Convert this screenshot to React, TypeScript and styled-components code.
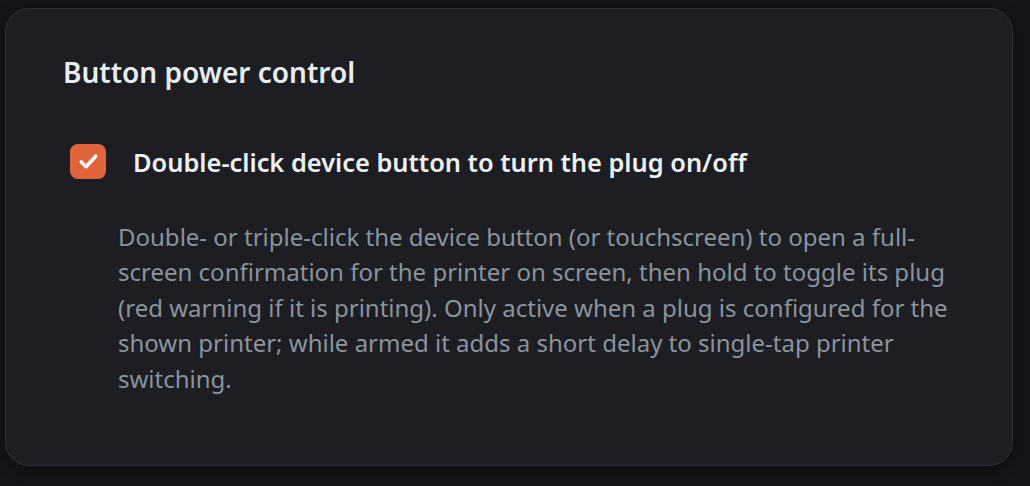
import React from "react";
import styled, { createGlobalStyle } from "styled-components";

const Global = createGlobalStyle`
  html, body { margin: 0; padding: 0; background: #131519; }
  body { font-family: "Noto Sans", "Open Sans", sans-serif; -webkit-font-smoothing: antialiased; }
  * { box-sizing: border-box; }
`;

const Page = styled.div`
  width: 1030px;
  height: 486px;
  padding: 8px 17px 20px 5px;
`;

const Card = styled.section`
  height: 458px;
  background: #1c1e23;
  border: 1px solid #2d3036;
  border-radius: 24px;
  box-shadow: 0 4px 14px rgba(0, 0, 0, 0.35);
  padding: 41px 57px 0 57px;
`;

const Title = styled.h2`
  margin: 0;
  font-size: 28px;
  font-weight: 600;
  line-height: 44px;
  color: #e9edf2;
`;

const Option = styled.div`
  margin-top: 50px;
  display: flex;
  align-items: center;
  gap: 27px;
  padding-left: 7px;
`;

const Box = styled.span<{ $checked: boolean }>`
  width: 36px;
  height: 35px;
  border-radius: 8px;
  background: ${(p) => (p.$checked ? "#e0633c" : "transparent")};
  display: flex;
  align-items: center;
  justify-content: center;
  flex: none;
`;

const Label = styled.div`
  font-size: 25.4px;
  font-weight: 600;
  color: #eef1f5;
  line-height: 34px;
`;

const Description = styled.p`
  margin: 39.5px 0 0 55px;
  max-width: 840px;
  font-size: 24px;
  line-height: 35.5px;
  color: #8b939d;
`;

export default function App() {
  return (
    <>
      <Global />
      <Page>
        <Card>
          <Title>Button power control</Title>
          <Option>
            <Box $checked>
              <svg width="23" height="23" viewBox="0 0 24 24" fill="none">
                <path d="M4.5 12.5l5 5L19.5 6.5" stroke="#fff" strokeWidth="3.8" strokeLinecap="round" strokeLinejoin="round" />
              </svg>
            </Box>
            <Label>Double-click device button to turn the plug on/off</Label>
          </Option>
          <Description>
            Double- or triple-click the device button (or touchscreen) to open a full-screen confirmation for the
            printer on screen, then hold to toggle its plug (red warning if it is printing). Only active when a plug
            is configured for the shown printer; while armed it adds a short delay to single-tap printer switching.
          </Description>
        </Card>
      </Page>
    </>
  );
}
